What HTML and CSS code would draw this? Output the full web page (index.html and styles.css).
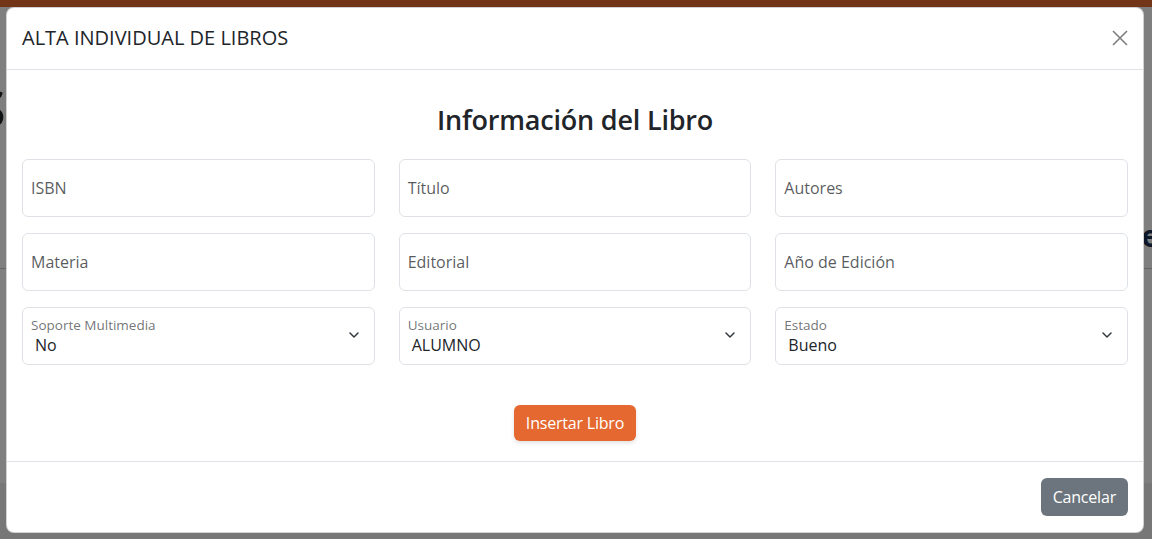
FILE: index.html
```html
<!DOCTYPE html>
<html lang="es">
<head>
<meta charset="utf-8">
<title>Alta individual de libros</title>
<link rel="stylesheet" href="styles.css">
</head>
<body>
<div class="page">
  <div class="topbar"></div>
  <div class="page-main">
    <div class="page-head">
      <span class="page-title">S</span>
      <span class="page-side">es</span>
    </div>
    <div class="page-rule"></div>
  </div>
  <div class="page-foot"></div>
</div>

<div class="backdrop"></div>

<div class="modal" role="dialog" aria-modal="true">
  <div class="modal-header">
    <h5 class="modal-title">ALTA INDIVIDUAL DE LIBROS</h5>
    <button class="btn-close" type="button" aria-label="Cerrar">
      <svg viewBox="0 0 16 16" width="16" height="16"><path d="M1 1 15 15M15 1 1 15" stroke="#000" stroke-width="1.6" fill="none"/></svg>
    </button>
  </div>
  <div class="modal-body">
    <h3 class="section-title">Información del Libro</h3>
    <div class="field-grid">
      <div class="field"><span class="placeholder">ISBN</span></div>
      <div class="field"><span class="placeholder">Título</span></div>
      <div class="field"><span class="placeholder">Autores</span></div>
      <div class="field"><span class="placeholder">Materia</span></div>
      <div class="field"><span class="placeholder">Editorial</span></div>
      <div class="field"><span class="placeholder">Año de Edición</span></div>
      <div class="field select">
        <div class="select-text"><span class="float-label">Soporte Multimedia</span><span class="value">No</span></div>
        <svg class="chevron" viewBox="0 0 10 6" width="10" height="6"><path d="M1 1 5 5 9 1" stroke="#343a40" stroke-width="1.5" fill="none" stroke-linecap="round" stroke-linejoin="round"/></svg>
      </div>
      <div class="field select">
        <div class="select-text"><span class="float-label">Usuario</span><span class="value">ALUMNO</span></div>
        <svg class="chevron" viewBox="0 0 10 6" width="10" height="6"><path d="M1 1 5 5 9 1" stroke="#343a40" stroke-width="1.5" fill="none" stroke-linecap="round" stroke-linejoin="round"/></svg>
      </div>
      <div class="field select">
        <div class="select-text"><span class="float-label">Estado</span><span class="value">Bueno</span></div>
        <svg class="chevron" viewBox="0 0 10 6" width="10" height="6"><path d="M1 1 5 5 9 1" stroke="#343a40" stroke-width="1.5" fill="none" stroke-linecap="round" stroke-linejoin="round"/></svg>
      </div>
    </div>
    <div class="actions">
      <button class="btn btn-primary" type="button">Insertar Libro</button>
    </div>
  </div>
  <div class="modal-footer">
    <button class="btn btn-secondary" type="button">Cancelar</button>
  </div>
</div>
</body>
</html>
```

FILE: styles.css
```css
* { box-sizing: border-box; }
html, body { margin: 0; padding: 0; }
body {
  width: 1152px;
  height: 539px;
  overflow: hidden;
  font-family: "Open Sans", "Noto Sans", sans-serif;
  color: #212529;
  background: #fff;
  position: relative;
}

/* underlying page */
.page { display: flex; flex-direction: column; height: 539px; }
.topbar { height: 7px; background: #e66a2e; }
.page-main { flex: 1; }
.page-head {
  display: flex;
  justify-content: space-between;
  align-items: flex-start;
  padding: 76px 0 0 0;
}
.page-title {
  font-size: 50px;
  font-weight: 600;
  margin-left: -22px;
  line-height: 50px;
}
.page-side {
  font-size: 30px;
  font-weight: 700;
  margin-top: 132px;
  margin-right: -22px;
  color: #1a2f50;
}
.page-rule { height: 1px; background: #ccc; margin-top: 12px; }
.page-foot { height: 56px; background: #eee; }

.backdrop {
  position: absolute;
  inset: 0;
  background: rgba(0, 0, 0, 0.5);
}

/* modal */
.modal {
  position: absolute;
  left: 6px;
  top: 7px;
  width: 1138px;
  background: #fff;
  border: 1px solid rgba(0, 0, 0, 0.175);
  border-radius: 8px;
  display: flex;
  flex-direction: column;
}
.modal-header {
  display: flex;
  align-items: center;
  justify-content: space-between;
  padding: 15px 15px 16px;
  border-bottom: 1px solid #dee2e6;
}
.modal-title {
  margin: 0;
  font-size: 20px;
  line-height: 30px;
  font-weight: 500;
}
.btn-close {
  border: 0;
  background: transparent;
  padding: 0;
  width: 16px;
  height: 16px;
  opacity: 0.5;
  display: flex;
  align-items: center;
  justify-content: center;
  cursor: pointer;
}

.modal-body { padding: 16px 15px 20px; }
.section-title {
  margin: 17px 0 22px;
  text-align: center;
  font-size: 27px;
  line-height: 34px;
  font-weight: 600;
  letter-spacing: -0.2px;
}

.field-grid {
  display: grid;
  grid-template-columns: repeat(3, 1fr);
  column-gap: 24px;
  row-gap: 16px;
}
.field {
  height: 58px;
  border: 1px solid #dee2e6;
  border-radius: 6px;
  display: flex;
  align-items: center;
  padding: 0 8px;
}
.placeholder {
  font-size: 16px;
  color: rgba(33, 37, 41, 0.75);
}
.field.select { justify-content: space-between; padding-right: 15px; }
.select-text { display: flex; flex-direction: column; margin-top: -1px; }
.float-label {
  font-size: 13.5px;
  line-height: 18px;
  color: rgba(33, 37, 41, 0.65);
}
.value {
  font-size: 16px;
  line-height: 22px;
  padding-left: 4px;
  color: #212529;
}
.chevron { margin-top: -2px; }

.actions { display: flex; justify-content: center; margin-top: 40px; }
.btn {
  font-family: inherit;
  font-size: 16px;
  line-height: 24px;
  border: 0;
  border-radius: 6px;
  color: #fff;
  cursor: pointer;
  letter-spacing: -0.2px;
}
.btn-primary {
  background: #e4682f;
  padding: 6px 12px;
  box-shadow: 0 2px 4px rgba(0, 0, 0, 0.12);
}
.modal-footer {
  display: flex;
  justify-content: flex-end;
  padding: 16px 15px 16px;
  border-top: 1px solid #dee2e6;
}
.btn-secondary {
  background: #6c757d;
  padding: 7px 12px;
}
```
